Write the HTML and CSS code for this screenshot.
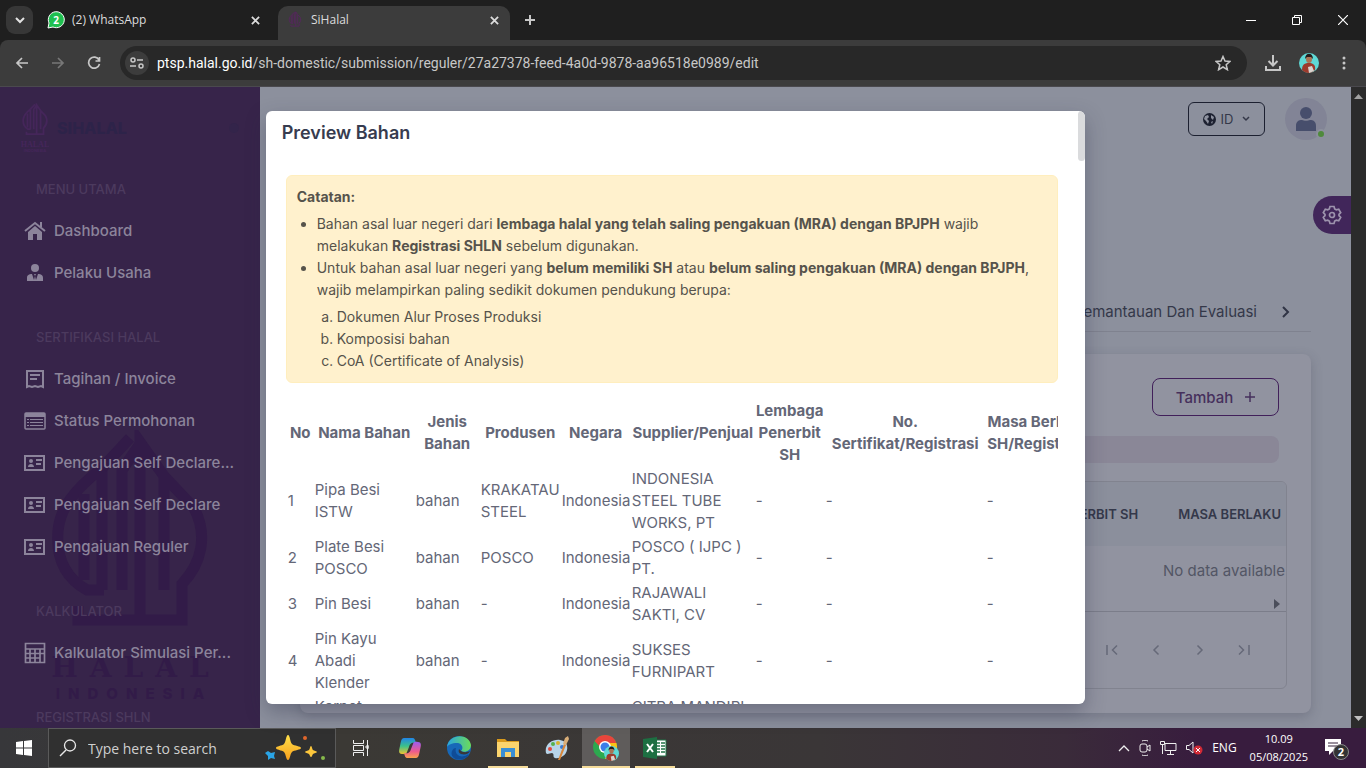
FILE: index.html
```html
<!DOCTYPE html>
<html lang="id">

<head>
    <meta charset="UTF-8">
    <meta name="viewport" content="width=device-width, initial-scale=1.0">
    <title>SiHalal</title>
    <link rel="stylesheet" href="styles.css">
</head>

<body>
    <!-- shared symbols -->
    <svg width="0" height="0" class="symbols" aria-hidden="true">
        <symbol id="halal" viewBox="0 0 156 226">
            <g fill="none" stroke="currentColor" stroke-width="11">
                <path d="M52 160H35C12 147 4 126 6 101C8 78 22 60 50 38V160" />
                <path d="M32 64V150M50 38L78 8M70 160V40L88 14M88 190V12L112 46V160M112 46L142 78C156 105 150 133 130 154V190H26V176" />
            </g>
        </symbol>
        <symbol id="idcard" viewBox="0 0 22 18">
            <rect x="1" y="2" width="19" height="14" fill="none" stroke="currentColor" stroke-width="2" />
            <circle cx="7" cy="7" r="2" fill="currentColor" />
            <path d="M4 13c0-4 6-4 6 0zM12 5h6v2h-6zM12 9h5v2h-5z" fill="currentColor" />
        </symbol>
        <symbol id="close" viewBox="0 0 10 10">
            <path d="M1 1l8 8M9 1l-8 8" fill="none" stroke="currentColor" stroke-width="2" />
        </symbol>
        <symbol id="person" viewBox="0 0 20 20">
            <circle cx="10" cy="10" r="10" fill="#5fd9d6" />
            <path d="M3 17c0-6 3-7 7-7s7 2 6 7c-4 4-9 4-13 0z" fill="#9c3a2c" />
            <path d="M9 14l4-1 2 5-5 2z" fill="#d8d4d0" />
            <ellipse cx="10" cy="6" rx="3" ry="4" fill="#a97456" />
            <path d="M6 6c0-7 8-7 8 0l-2-2H8z" fill="#241c1c" />
        </symbol>
    </svg>

    <header class="tabbar">
        <button class="tab-search" aria-label="Search tabs">
            <svg width="10" height="7" viewBox="0 0 10 7"><path d="M1 1l4 4 4-4" fill="none" stroke="#e3e3e3" stroke-width="2" /></svg>
        </button>
        <div class="tab">
            <svg width="18" height="18" viewBox="0 0 18 18">
                <path d="M1 17l1-5a8 8 0 1 1 4 4z" fill="#1fbf50" stroke="#fff" />
                <text x="9" y="13" text-anchor="middle" class="wa-count">2</text>
            </svg>
            <span>(2) WhatsApp</span>
            <button aria-label="Close tab"><svg width="9" height="9"><use href="#close" /></svg></button>
        </div>
        <div class="tab active">
            <svg width="18" height="18" class="tab-halal"><use href="#halal" /></svg>
            <span>SiHalal</span>
            <button aria-label="Close tab"><svg width="9" height="9"><use href="#close" /></svg></button>
        </div>
        <button class="new-tab" aria-label="New tab">
            <svg width="10" height="10" viewBox="0 0 10 10"><path d="M5 0v10M0 5h10" stroke="#c7c7c7" stroke-width="2" /></svg>
        </button>
        <div class="window-buttons">
            <button aria-label="Minimize"><svg width="10" height="10"><path d="M0 5.500h10" stroke="#fff" /></svg></button>
            <button aria-label="Restore"><svg width="10" height="10" viewBox="0 0 10 10"><path d="M.5 2.500h7v7h-7zM2.500 2V.5h7v7H8" fill="none" stroke="#fff" /></svg></button>
            <button aria-label="Close"><svg width="10" height="10" viewBox="0 0 10 10"><path d="M0 0l10 10M10 0L0 10" stroke="#fff" stroke-width="1.200" /></svg></button>
        </div>
    </header>

    <nav class="toolbar">
        <button aria-label="Back"><svg width="14" height="14" viewBox="0 0 14 14"><path d="M13 7H2M7 2L2 7l5 5" fill="none" stroke="#c7c7c7" stroke-width="1.700" /></svg></button>
        <button aria-label="Forward"><svg width="14" height="14" viewBox="0 0 14 14"><path d="M1 7h11M7 2l5 5-5 5" fill="none" stroke="#777" stroke-width="1.700" /></svg></button>
        <button aria-label="Reload"><svg width="14" height="14" viewBox="0 0 14 14"><path d="M12 4a5.500 5.500 0 1 0 .5 4M12.500 1v4H8.500" fill="none" stroke="#c7c7c7" stroke-width="1.700" /></svg></button>
        <div class="address">
            <span class="site-info">
                <svg width="14" height="12" viewBox="0 0 14 12" fill="none" stroke="#c7c7c7" stroke-width="1.500"><circle cx="3" cy="3" r="2" /><path d="M7 3h6M0 9h6" /><circle cx="11" cy="9" r="2" /></svg>
            </span>
            <span class="url"><b>ptsp.halal.go.id</b>/sh-domestic/submission/reguler/27a27378-feed-4a0d-9878-aa96518e0989/edit</span>
            <button aria-label="Bookmark"><svg width="16" height="16" viewBox="0 0 16 16"><path d="M8 1.500l2 4.500 5 .4-3.800 3.300 1.200 5L8 12l-4.400 2.700 1.200-5L1 6.400 6 6z" fill="none" stroke="#c7c7c7" stroke-width="1.500" /></svg></button>
        </div>
        <button aria-label="Downloads"><svg width="16" height="16" viewBox="0 0 16 16"><path d="M8 0v10M3.500 6L8 10.500 12.500 6M1 11v4h14v-4" fill="none" stroke="#c7c7c7" stroke-width="2" /></svg></button>
        <button aria-label="Profile"><svg width="20" height="20"><use href="#person" /></svg></button>
        <button aria-label="Menu"><svg width="4" height="14" viewBox="0 0 4 14" fill="#c7c7c7"><circle cx="2" cy="2" r="1.500" /><circle cx="2" cy="7" r="1.500" /><circle cx="2" cy="12" r="1.500" /></svg></button>
    </nav>

    <div class="page">
        <aside class="sidebar">
            <div class="watermark">
                <svg viewBox="0 0 156 266">
                    <use href="#halal" width="156" height="226" y="-8" />
                    <text x="84" y="239" text-anchor="middle" class="wm-title">HALAL</text>
                    <text x="82" y="261" text-anchor="middle" class="wm-sub">INDONESIA</text>
                </svg>
            </div>
            <div class="brand">
                <svg width="28" height="50" viewBox="0 0 28 50">
                    <use href="#halal" width="26" height="37" x="1" />
                    <text x="14" y="44" text-anchor="middle" class="logo-title">HALAL</text>
                    <text x="14" y="49" text-anchor="middle" class="logo-sub">INDONESIA</text>
                </svg>
                <span class="brand-name">SIHALAL</span>
                <span class="brand-pin"></span>
            </div>

            <h6>MENU UTAMA</h6>
            <a href="#"><svg width="22" height="20" viewBox="0 0 22 20"><path d="M1 10L11 2l10 8M17 6V1" fill="none" stroke="currentColor" stroke-width="2" /><path d="M4 11l7-6 7 6v8h-5v-6H9v6H4z" /></svg>Dashboard</a>
            <a href="#"><svg width="22" height="20" viewBox="0 0 22 20"><circle cx="11" cy="5" r="4" /><path d="M3 18v-3c0-3 2-4 5-4l2 6 1-4-1-2h2l-1 2 1 4 2-6c3 0 5 1 5 4v3z" /></svg>Pelaku Usaha</a>

            <h6>SERTIFIKASI HALAL</h6>
            <a href="#"><svg width="22" height="20" viewBox="0 0 22 20"><path d="M3 2h16v16l-2-1-3 1-3-1-3 1-3-1-2 1zM6 6h10M6 10h7" fill="none" stroke="currentColor" stroke-width="2" /></svg>Tagihan / Invoice</a>
            <a href="#"><svg width="22" height="20" viewBox="0 0 22 20"><rect x="1" y="2" width="20" height="16" rx="1" fill="none" stroke="currentColor" stroke-width="1.500" /><path d="M1 2h20v4H1zM3 8h2v1H3zM6 8h13v1H6zM3 11h2v1H3zM6 11h13v1H6zM3 14h2v1H3zM6 14h13v1H6z" /></svg>Status Permohonan</a>
            <a href="#"><svg width="22" height="18"><use href="#idcard" /></svg>Pengajuan Self Declare...</a>
            <a href="#"><svg width="22" height="18"><use href="#idcard" /></svg>Pengajuan Self Declare</a>
            <a href="#"><svg width="22" height="18"><use href="#idcard" /></svg>Pengajuan Reguler</a>

            <h6>KALKULATOR</h6>
            <a href="#"><svg width="22" height="22" viewBox="0 0 22 22"><path d="M1.500 1.500h19v19h-19zM1 7h20M1 11.500h20M1 16h15M6 7v14M11 7v14M16 7v14" fill="none" stroke="currentColor" stroke-width="1.700" /></svg>Kalkulator Simulasi Per...</a>

            <h6>REGISTRASI SHLN</h6>
        </aside>

        <main class="main">
            <div class="navbar">
                <button class="lang">
                    <svg width="13" height="13" viewBox="0 0 13 13"><circle cx="6.500" cy="6.500" r="6.500" fill="#1c2030" /><path d="M2 3l3-1 1 2-2 2 2 2-1 3-2-3-2-2zM8 2l3 2-1 3-2-2zM8 9l2-1-1 3z" fill="#8d919e" /></svg>
                    ID
                    <svg width="8" height="6" viewBox="0 0 8 6"><path d="M1 1l3 3 3-3" fill="none" stroke="#343849" stroke-width="1.500" /></svg>
                </button>
                <div class="avatar">
                    <svg width="22" height="26" viewBox="0 0 22 26" fill="#474e6c"><circle cx="11" cy="7" r="6" /><path d="M1 25v-5c0-5 3-6 6-6 2 1 6 1 8 0 3 0 6 1 6 6v5z" /></svg>
                    <i class="online"></i>
                </div>
            </div>

            <div class="steps">
                <a href="#">Pemantauan Dan Evaluasi</a>
                <svg width="8" height="12" viewBox="0 0 8 12"><path d="M1 1l5 5-5 5" fill="none" stroke="#303445" stroke-width="2" /></svg>
            </div>

            <section class="card">
                <div class="card-top">
                    <button class="add">Tambah <svg width="10" height="10" viewBox="0 0 10 10"><path d="M5 0v10M0 5h10" stroke="#46305c" stroke-width="1.500" /></svg></button>
                </div>
                <div class="strip"></div>
                <div class="grid">
                    <div class="grid-head"><span>PENERBIT SH</span><span>MASA BERLAKU</span></div>
                    <div class="grid-empty">No data available</div>
                    <div class="grid-scroll"><svg width="6" height="10"><path d="M0 0l6 5-6 5z" fill="#4b4e5b" /></svg></div>
                    <div class="pager">
                        <button aria-label="First page"><svg width="12" height="12" viewBox="0 0 12 12"><path d="M1 1v10M11 1.500L6.500 6l4.500 4.500" /></svg></button>
                        <button aria-label="Previous page"><svg width="12" height="12" viewBox="0 0 12 12"><path d="M8.500 1.500L4 6l4.500 4.500" /></svg></button>
                        <button aria-label="Next page"><svg width="12" height="12" viewBox="0 0 12 12"><path d="M3.500 1.500L8 6l-4.500 4.500" /></svg></button>
                        <button aria-label="Last page"><svg width="12" height="12" viewBox="0 0 12 12"><path d="M11 1v10M1 1.500L5.500 6 1 10.500" /></svg></button>
                    </div>
                </div>
            </section>

            <button class="customizer" aria-label="Settings">
                <svg width="20" height="20" viewBox="0 0 20 20" fill="none" stroke="#9d93ad" stroke-width="1.700"><path d="M8 1.500h4l.7 2.400 1.600.9 2.400-.6 2 3.400L17 9.400v1.200l1.700 1.800-2 3.400-2.400-.6-1.600.9-.7 2.400H8l-.7-2.400-1.600-.9-2.400.6-2-3.400L3 10.600V9.400L1.300 7.600l2-3.400 2.400.6 1.600-.9z" /><circle cx="10" cy="10" r="2.500" /></svg>
            </button>
        </main>

        <div class="scrollbar">
            <svg width="9" height="5"><path d="M0 5l4.500-5L9 5z" fill="#a0a0a0" /></svg>
            <svg width="9" height="5"><path d="M0 0l4.500 5L9 0z" fill="#c0c0c0" /></svg>
        </div>

        <div class="overlay">
            <div class="modal" role="dialog" aria-labelledby="modalTitle">
                <div class="modal-content">
                    <h2 id="modalTitle">Preview Bahan</h2>
                    <div class="modal-body">
                        <div class="note">
                            <strong>Catatan:</strong>
                            <ul>
                                <li>Bahan asal luar negeri dari <b>lembaga halal yang telah saling pengakuan (MRA) dengan BPJPH</b> wajib melakukan <b>Registrasi SHLN</b> sebelum digunakan.</li>
                                <li>Untuk bahan asal luar negeri yang <b>belum memiliki SH</b> atau <b>belum saling pengakuan (MRA) dengan BPJPH</b>, wajib melampirkan paling sedikit dokumen pendukung berupa:
                                    <ol>
                                        <li>Dokumen Alur Proses Produksi</li>
                                        <li>Komposisi bahan</li>
                                        <li>CoA (Certificate of Analysis)</li>
                                    </ol>
                                </li>
                            </ul>
                        </div>
                        <div class="table-wrap">
                            <table>
                                <colgroup>
                                    <col class="c-no"><col class="c-nama"><col class="c-jenis"><col class="c-produsen"><col class="c-negara"><col class="c-supplier"><col class="c-lembaga"><col class="c-sertifikat"><col class="c-masa">
                                </colgroup>
                                <thead>
                                    <tr>
                                        <th>No</th>
                                        <th>Nama Bahan</th>
                                        <th>Jenis Bahan</th>
                                        <th>Produsen</th>
                                        <th>Negara</th>
                                        <th>Supplier/Penjual</th>
                                        <th>Lembaga Penerbit SH</th>
                                        <th>No. Sertifikat/Registrasi</th>
                                        <th>Masa Berlaku SH/Registrasi</th>
                                    </tr>
                                </thead>
                                <tbody>
                                    <tr><td>1</td><td>Pipa Besi ISTW</td><td>bahan</td><td>KRAKATAU STEEL</td><td>Indonesia</td><td>INDONESIA STEEL TUBE WORKS, PT</td><td>-</td><td>-</td><td>-</td></tr>
                                    <tr><td>2</td><td>Plate Besi POSCO</td><td>bahan</td><td>POSCO</td><td>Indonesia</td><td>POSCO ( IJPC ) PT.</td><td>-</td><td>-</td><td>-</td></tr>
                                    <tr><td>3</td><td>Pin Besi</td><td>bahan</td><td>-</td><td>Indonesia</td><td>RAJAWALI SAKTI, CV</td><td>-</td><td>-</td><td>-</td></tr>
                                    <tr><td>4</td><td>Pin Kayu Abadi Klender</td><td>bahan</td><td>-</td><td>Indonesia</td><td>SUKSES FURNIPART</td><td>-</td><td>-</td><td>-</td></tr>
                                    <tr><td>5</td><td>Karpet<br>Lantai</td><td>bahan</td><td>-</td><td>Indonesia</td><td>CITRA MANDIRI<br>PT</td><td>-</td><td>-</td><td>-</td></tr>
                                </tbody>
                            </table>
                        </div>
                    </div>
                </div>
                <div class="modal-scroll"><i></i></div>
            </div>
        </div>
    </div>

    <footer class="taskbar">
        <button class="start" aria-label="Start"><svg width="16" height="16" viewBox="0 0 16 16"><path d="M0 2l7-1v6.500H0zM8 1l8-1v7.500H8zM0 8.500h7V15l-7-1zM8 8.500h8V16l-8-1z" fill="#fff" /></svg></button>
        <div class="search">
            <svg width="18" height="18" viewBox="0 0 18 18"><path d="M1 17l6-6" stroke="#e8e8e8" stroke-width="1.500" /><circle cx="11" cy="6.500" r="5.500" fill="none" stroke="#e8e8e8" stroke-width="1.300" /></svg>
            <input type="text" placeholder="Type here to search" aria-label="Search">
            <svg width="60" height="26" viewBox="0 0 60 26">
                <defs><linearGradient id="gold" x2="0" y2="1"><stop offset="0" stop-color="#ffe04a" /><stop offset="1" stop-color="#f7a01c" /></linearGradient></defs>
                <path d="M23 1c2 0 2 7 4 9s9 2 9 4-7 2-9 4-2 8-4 8-2-6-4-8-8-2-8-4 6-2 8-4 2-9 4-9z" fill="url(#gold)" transform="translate(0 -1)" />
                <path d="M46 11c1 0 1 3 2 4s4 1 4 2-3 1-4 2-1 3-2 3-1-2-2-3-4-1-4-2 3-1 4-2 1-4 2-4z" fill="#fbc63c" />
                <path d="M3 16l3 2 4-1-1 4 1 3-4-1-3 2v-4l-3-3z" fill="#2aa4e6" />
                <circle cx="40" cy="3" r="2" fill="#e0662c" /><circle cx="58" cy="23" r="2" fill="#86b94b" />
            </svg>
        </div>
        <div class="apps">
            <button aria-label="Task View"><svg width="16" height="16" viewBox="0 0 16 16" fill="none" stroke="#eee"><path d="M.5 0v3.500h10V0M.5 16v-3.500h10V16M.5 5.500h10v5H.5zM14.500 0v16M13 6h3v2h-3z" /></svg></button>
            <button aria-label="Copilot"><svg width="24" height="24" viewBox="0 0 24 24">
                <defs><linearGradient id="cpA" x2="0" y2="1"><stop offset="0" stop-color="#2185e8" /><stop offset=".5" stop-color="#3bc18a" /><stop offset="1" stop-color="#f2c430" /></linearGradient><linearGradient id="cpB" x2="0" y2="1"><stop offset="0" stop-color="#9b5cf0" /><stop offset=".6" stop-color="#ee5b8c" /><stop offset="1" stop-color="#f9a24c" /></linearGradient></defs>
                <path d="M6 2h8c3 0 3 2 4 5-5-1-6 1-7 4l-2 5c-1 3-3 2-5 2-4 0-3-4-2-8S3 2 6 2z" fill="url(#cpA)" />
                <path d="M18 22h-8c-3 0-3-2-4-5 5 1 6-1 7-4l2-5c1-3 3-2 5-2 4 0 3 4 2 8s-1 8-4 8z" fill="url(#cpB)" />
            </svg></button>
            <button aria-label="Edge"><svg width="24" height="24" viewBox="0 0 24 24">
                <defs><linearGradient id="edge"><stop offset="0" stop-color="#29a5e0" /><stop offset="1" stop-color="#6bdc5a" /></linearGradient></defs>
                <circle cx="12" cy="12" r="12" fill="#1768b8" />
                <path d="M0 11C1-2 22-4 24 9c0 6-6 8-10 6 3-3 1-8-4-8S1 9 0 11z" fill="url(#edge)" />
                <path d="M9 12c-2 6 4 11 11 7 2-1 2 0 1 1-7 7-19 3-16-5 1-2 2-3 4-3z" fill="#0f4c97" />
                <path d="M14 15c3 2 7 1 9 0-1 3-5 4-9 3-2-1-3-2-2-5z" fill="#3a3837" />
            </svg></button>
            <button class="open" aria-label="File Explorer"><svg width="22" height="20" viewBox="0 0 22 20"><path d="M0 1h8l2 2h12v5H0z" fill="#d99a1c" /><path d="M0 4h22v15H0z" fill="#fbd46d" /><path d="M4 10h14v9h-4v-5H8v5H4z" fill="#3a8fd4" /></svg></button>
            <button aria-label="Paint"><svg width="24" height="24" viewBox="0 0 24 24"><path d="M1 17C-1 8 8 3 15 4c6 1 8 5 7 10-1 6-8 9-12 8-3-1 0-4-3-5-2 0-5 2-6 0z" fill="#b8d4e8" /><circle cx="5" cy="13" r="2" fill="#e0493b" /><circle cx="8" cy="8" r="2" fill="#56b04c" /><circle cx="13" cy="7" r="2" fill="#d8b32c" /><circle cx="17" cy="11" r="2" fill="#3779d0" /><path d="M13 24l6-16 2 1-6 15z" fill="#d8873b" /><path d="M18 8l2-6 3-2 1 3-3 6z" fill="#d9ae78" /></svg></button>
            <button class="open active" aria-label="Chrome"><svg width="26" height="28" viewBox="0 0 26 28">
                <circle cx="12" cy="13" r="12" fill="#2da94f" /><path d="M1.600 7a12 12 0 0 1 21.800 2H12v4H7z" fill="#e8453c" /><path d="M12 25l6-12-3-4h8.500C26 18 20 25 12 25z" fill="#fbc116" /><circle cx="12" cy="13" r="6" fill="#fff" /><circle cx="12" cy="13" r="4.500" fill="#3b7de9" /><use href="#person" x="11" y="12" width="15" height="15" />
            </svg></button>
            <button class="open" aria-label="Excel"><svg width="24" height="22" viewBox="0 0 24 22"><path d="M12 3h11v16H12z" fill="#fff" stroke="#217346" /><path d="M14 6h3M18 6h4M14 9h3M18 9h4M14 12h3M18 12h4M14 15h3M18 15h4" stroke="#217346" stroke-width="1.500" /><path d="M0 2l14-2v22L0 20z" fill="#1d6f42" /><path d="M4 7l6 8M10 7l-6 8" stroke="#fff" stroke-width="2" /></svg></button>
        </div>
        <div class="tray">
            <svg width="12" height="8" viewBox="0 0 12 8"><path d="M1 7l5-5 5 5" fill="none" stroke="#eee" stroke-width="1.300" /></svg>
            <svg width="12" height="16" viewBox="0 0 12 16" fill="none" stroke="#eee"><rect x="1" y="4" width="7" height="8" rx="2" /><path d="M8 7l3-2v6L8 9M3 1c2-1 4-1 6 0M3 15c2 1 4 1 6 0" /></svg>
            <svg width="17" height="14" viewBox="0 0 17 14" fill="none" stroke="#eee"><path d="M5 2.500h11v7H5zM10.500 10v3M7 13.500h7M.5.5h4v3h-4zM2.500 4v9" /></svg>
            <svg width="17" height="14" viewBox="0 0 17 14"><path d="M.5 4.500H3L7 1v11L3 8.500H.500z" fill="none" stroke="#eee" /><circle cx="12" cy="9" r="4.500" fill="#d32a36" /><path d="M10 7l4 4M14 7l-4 4" stroke="#fff" /></svg>
            <span class="lang-code">ENG</span>
            <div class="clock"><time>10.09</time><time>05/08/2025</time></div>
            <div class="notif">
                <svg width="16" height="16" viewBox="0 0 16 16"><path d="M0 0h16v12H8l-4 4v-4H0z" fill="#fff" /><path d="M3 4h10M3 7h10" stroke="#33203a" /></svg>
                <span>2</span>
            </div>
        </div>
    </footer>
</body>

</html>
```
FILE: styles.css
```css
* {
    margin: 0;
    padding: 0;
    box-sizing: border-box;
}

body {
    font-family: Inter, "Liberation Sans", sans-serif;
    font-size: 15px;
    line-height: 22px;
    height: 100vh;
    display: flex;
    flex-direction: column;
    overflow: hidden;
    background: #1f1f1f;
}

button {
    font-family: inherit;
    background: none;
    border: none;
    color: inherit;
    cursor: pointer;
    display: flex;
    align-items: center;
    justify-content: center;
}

svg {
    flex-shrink: 0;
}

a {
    color: inherit;
    text-decoration: none;
}

.symbols {
    position: absolute;
}

/* browser chrome */
.tabbar,
.toolbar,
.taskbar {
    font-family: "Open Sans", "Noto Sans", sans-serif;
}

.tabbar {
    height: 40px;
    flex-shrink: 0;
    display: flex;
    align-items: center;
    padding-left: 6px;
    background: #1f1f1f;
    font-size: 12px;
    color: #dcdcdc;
}

.tab-search {
    width: 27px;
    height: 28px;
    border-radius: 9px;
    background: #373737;
    margin-right: 6px;
}

.tab {
    width: 232px;
    height: 34px;
    margin-top: 6px;
    padding: 0 8px 6px;
    display: flex;
    align-items: center;
    gap: 7px;
}

.tab span {
    flex: 1;
}

.tab button {
    width: 16px;
    height: 16px;
}

.tab.active {
    background: #3c3c3c;
    border-radius: 10px 10px 0 0;
    margin-left: 7px;
}

.tab-halal {
    color: #57265f;
}

.wa-count {
    font-size: 10px;
    font-weight: 700;
    fill: #fff;
}

.new-tab {
    width: 28px;
    height: 28px;
    margin-left: 6px;
}

.window-buttons {
    margin-left: auto;
    display: flex;
}

.window-buttons button {
    width: 46px;
    height: 40px;
}

.toolbar {
    height: 47px;
    flex-shrink: 0;
    display: flex;
    align-items: center;
    padding: 0 5px 0 4px;
    background: #3c3c3c;
    border-radius: 8px 8px 0 0;
    border-bottom: 1px solid #4a494e;
}

.toolbar button {
    width: 36px;
    height: 34px;
}

.toolbar > button:last-child {
    width: 34px;
}

.address {
    flex: 1;
    height: 34px;
    margin: 0 8px;
    padding: 0 6px 0 5px;
    border-radius: 17px;
    background: #282828;
    display: flex;
    align-items: center;
    gap: 8px;
    color: #c7c7c7;
    font-family: Roboto, "Open Sans", sans-serif;
    font-size: 14px;
}

.address b {
    font-weight: 400;
    color: #fff;
}

.site-info {
    width: 24px;
    height: 24px;
    border-radius: 50%;
    background: #3c3c3c;
    display: flex;
    align-items: center;
    justify-content: center;
}

.url {
    flex: 1;
    white-space: nowrap;
}

/* page */
.page {
    flex: 1;
    min-height: 0;
    display: flex;
    position: relative;
    background: #8c909d;
}

.sidebar {
    width: 260px;
    flex-shrink: 0;
    background: #37244a;
    color: #8c849b;
    position: relative;
    z-index: 0;
    overflow: hidden;
}

.watermark {
    position: absolute;
    z-index: -1;
    left: 52px;
    bottom: 24px;
    width: 156px;
    color: #321b48;
}

.watermark svg {
    display: block;
    overflow: visible;
}

.wm-title {
    font: 900 28px "DejaVu Serif", serif;
    letter-spacing: 12px;
    fill: #321b48;
}

.wm-sub {
    font: 800 15px Inter, sans-serif;
    letter-spacing: 8px;
    fill: #321b48;
}

.brand {
    display: flex;
    align-items: center;
    gap: 8px;
    height: 64px;
    padding: 0 21px;
    margin-top: 9px;
    color: #45265a;
}

.logo-title {
    font: 700 8px "Liberation Serif", serif;
    fill: #45265a;
}

.logo-sub {
    font: 700 4px Inter, sans-serif;
    fill: #45265a;
}

.brand-name {
    font-size: 16px;
    font-weight: 800;
    color: #2d2349;
    flex: 1;
}

.brand-pin {
    width: 10px;
    height: 10px;
    border-radius: 50%;
    background: #33244a;
}

.sidebar h6 {
    font-size: 13px;
    font-weight: 500;
    line-height: 20px;
    color: #4c3a5e;
    padding-left: 36px;
    margin: 33px 0 11px;
}

.sidebar .brand + h6 {
    margin-top: 19px;
}

.sidebar a {
    display: flex;
    align-items: center;
    gap: 8px;
    height: 42px;
    padding-left: 24px;
    font-size: 15px;
    font-weight: 500;
    white-space: nowrap;
}

.sidebar a svg {
    fill: currentColor;
}

.main {
    flex: 1;
    min-width: 0;
    position: relative;
    padding: 0 40px;
    color: #343849;
}

.navbar {
    height: 64px;
    margin-right: -16px;
    display: flex;
    align-items: center;
    justify-content: flex-end;
    gap: 20px;
}

.lang {
    width: 77px;
    height: 34px;
    border: 1px solid #1c2030;
    border-radius: 6px;
    gap: 5px;
    font-size: 13px;
}

.lang svg:last-child {
    margin-left: 4px;
}

.avatar {
    width: 42px;
    height: 42px;
    border-radius: 50%;
    background: #828496;
    display: flex;
    align-items: center;
    justify-content: center;
    position: relative;
}

.online {
    position: absolute;
    right: 1px;
    bottom: 1px;
    width: 10px;
    height: 10px;
    border-radius: 50%;
    background: #4f8a3c;
    border: 2px solid #8c909d;
}

.steps {
    margin-top: 142px;
    height: 39px;
    padding-right: 21px;
    border-bottom: 1px solid #7f828f;
    display: flex;
    align-items: center;
    justify-content: flex-end;
    gap: 25px;
}

.card {
    margin-top: 22px;
    padding: 24px;
    border-radius: 8px;
    background: #9193a0;
    box-shadow: 0 4px 12px rgba(50, 50, 70, 0.25);
}

.card-top {
    display: flex;
    justify-content: flex-end;
    padding-right: 8px;
}

.add {
    width: 127px;
    height: 38px;
    border: 1px solid #41205a;
    border-radius: 8px;
    color: #46305c;
    gap: 12px;
    font-size: 15px;
    font-weight: 500;
}

.strip {
    height: 27px;
    margin: 20px 8px 18px 0;
    border-radius: 8px;
    background: #8a8797;
}

.grid {
    border: 1px solid #81838f;
    border-radius: 6px;
    overflow: hidden;
}

.grid-head {
    height: 64px;
    padding-right: 5px;
    display: flex;
    align-items: center;
    justify-content: flex-end;
    gap: 40px;
    background: #8b8f9c;
    font-size: 13px;
    font-weight: 600;
    color: #34384a;
}

.grid-empty {
    height: 50px;
    line-height: 50px;
    text-align: right;
    color: #535665;
    padding-right: 1px;
}

.grid-scroll {
    height: 16px;
    display: flex;
    justify-content: flex-end;
    align-items: center;
    padding-right: 6px;
    border-bottom: 1px solid #7b7d8a;
}

.pager {
    height: 76px;
    padding-right: 20px;
    display: flex;
    align-items: center;
    justify-content: flex-end;
}

.pager button {
    width: 44px;
    height: 44px;
}

.pager path {
    fill: none;
    stroke: #666978;
    stroke-width: 1.5;
}

.customizer {
    position: absolute;
    right: 0;
    top: 109px;
    width: 38px;
    height: 38px;
    border-radius: 19px 0 0 19px;
    background: #41265a;
}

.scrollbar {
    width: 15px;
    background: #2b2b2b;
    display: flex;
    flex-direction: column;
    align-items: center;
    justify-content: space-between;
    padding: 7px 0;
}

/* modal */
.overlay {
    position: absolute;
    inset: 0 15px 0 0;
    padding: 24px;
    display: flex;
    justify-content: center;
}

.modal {
    width: 60vw;
    display: flex;
    background: #fff;
    border-radius: 6px;
    overflow: hidden;
    color: #646777;
    box-shadow: 0 8px 20px rgba(40, 42, 70, 0.35);
}

.modal-content {
    flex: 1;
    min-width: 0;
}

.modal-scroll {
    width: 7px;
}

.modal-scroll i {
    display: block;
    height: 50px;
    border-radius: 4px;
    background: #dadbdd;
}

.modal h2 {
    font-size: 18px;
    font-weight: 600;
    line-height: 24px;
    color: #373c4f;
    padding: 10px 16px;
}

.modal-body {
    padding: 20px;
}

.note {
    background: #fff1cd;
    border: 1px solid #ffeebe;
    border-radius: 6px;
    padding: 10px;
    color: #56534b;
    font-size: 14px;
}

.note strong,
.note b {
    font-weight: 700;
}

.note ul,
.note ol {
    padding-left: 20px;
    margin-top: 5px;
}

.note ol {
    list-style: lower-alpha;
}

.table-wrap {
    margin-top: 15px;
    overflow: hidden;
}

table {
    width: 804px;
    table-layout: fixed;
    border-spacing: 2px;
}

td {
    vertical-align: middle;
}

th {
    font-weight: 700;
}

.c-no { width: 25px; }
.c-nama { width: 99px; }
.c-jenis { width: 63px; }
.c-produsen { width: 79px; }
.c-negara { width: 68px; }
.c-supplier { width: 122px; }
.c-lembaga { width: 68px; }
.c-sertifikat { width: 159px; }
.c-masa { width: 101px; }

/* taskbar */
.taskbar {
    height: 40px;
    flex-shrink: 0;
    display: flex;
    background: linear-gradient(90deg, #37373a, #3b3935 25%, #3a3637 60%, #3a2b3a 78%, #381c3e 88%);
    color: #fff;
    font-size: 12px;
}

.start {
    width: 48px;
}

.search {
    width: 288px;
    display: flex;
    align-items: center;
    gap: 11px;
    padding: 0 10px;
    background: #303030;
    border: 1px solid #5a5a5a;
}

.search input {
    flex: 1;
    min-width: 0;
    height: 24px;
    background: none;
    border: none;
    outline: none;
    color: #fff;
    font-family: inherit;
    font-size: 14px;
}

.search input::placeholder {
    color: #cfcfcf;
}

.apps {
    display: flex;
    gap: 1px;
    margin-left: 1px;
}

.apps button {
    width: 48px;
}

.apps .open {
    background: linear-gradient(#f5dc9a, #f5dc9a) center bottom / 40px 2px no-repeat;
}

.apps .active {
    background-color: #5f5c5b;
    background-size: 48px 2px;
}

.tray {
    margin-left: auto;
    padding-right: 15px;
    display: flex;
    align-items: center;
    gap: 9px;
}

.clock {
    display: flex;
    flex-direction: column;
    align-items: center;
    font-size: 11px;
    line-height: 18px;
    padding: 0 8px 0 4px;
}

.notif {
    position: relative;
    width: 26px;
    padding-top: 4px;
}

.notif span {
    position: absolute;
    left: 8px;
    top: 9px;
    width: 16px;
    height: 16px;
    border-radius: 50%;
    border: 1px solid #8a8a8a;
    background: #333;
    font-size: 11px;
    font-weight: 700;
    line-height: 14px;
    text-align: center;
}
```
